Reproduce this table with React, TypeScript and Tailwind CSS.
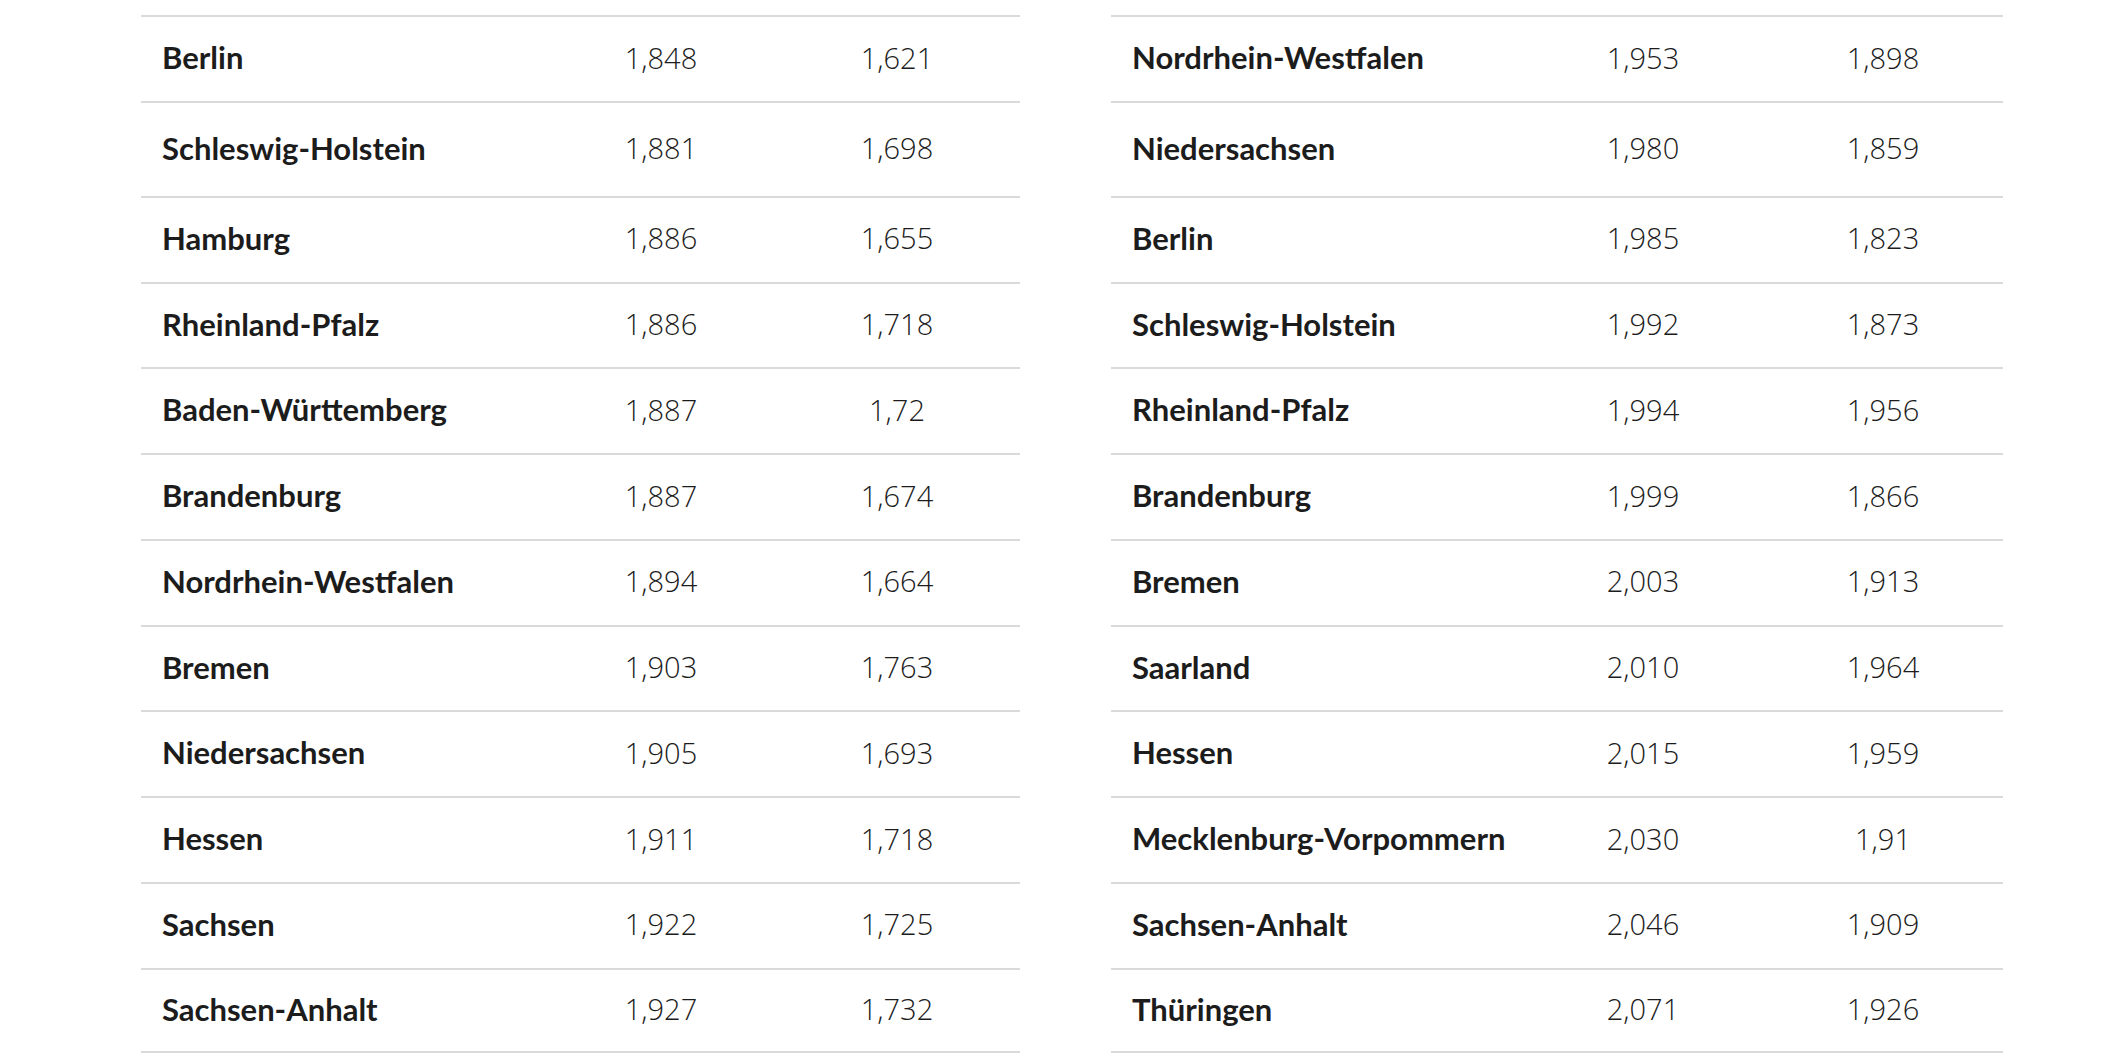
const left: [string, string, string][] = [
  ["Berlin", "1,848", "1,621"],
  ["Schleswig-Holstein", "1,881", "1,698"],
  ["Hamburg", "1,886", "1,655"],
  ["Rheinland-Pfalz", "1,886", "1,718"],
  ["Baden-Württemberg", "1,887", "1,72"],
  ["Brandenburg", "1,887", "1,674"],
  ["Nordrhein-Westfalen", "1,894", "1,664"],
  ["Bremen", "1,903", "1,763"],
  ["Niedersachsen", "1,905", "1,693"],
  ["Hessen", "1,911", "1,718"],
  ["Sachsen", "1,922", "1,725"],
  ["Sachsen-Anhalt", "1,927", "1,732"],
];

const right: [string, string, string][] = [
  ["Nordrhein-Westfalen", "1,953", "1,898"],
  ["Niedersachsen", "1,980", "1,859"],
  ["Berlin", "1,985", "1,823"],
  ["Schleswig-Holstein", "1,992", "1,873"],
  ["Rheinland-Pfalz", "1,994", "1,956"],
  ["Brandenburg", "1,999", "1,866"],
  ["Bremen", "2,003", "1,913"],
  ["Saarland", "2,010", "1,964"],
  ["Hessen", "2,015", "1,959"],
  ["Mecklenburg-Vorpommern", "2,030", "1,91"],
  ["Sachsen-Anhalt", "2,046", "1,909"],
  ["Thüringen", "2,071", "1,926"],
];

function StatTable({ rows, wide }: { rows: [string, string, string][]; wide?: boolean }) {
  return (
    <div className={wide ? "w-[892px]" : "w-[879px]"}>
      {rows.map(([name, a, b], i) => (
        <div
          key={name + i}
          className={
            (wide
              ? "grid grid-cols-[412px_240px_240px] "
              : "grid grid-cols-[400px_240px_232px_1fr] ") +
            "items-center border-t-2 border-[#dadada] pb-[3px] " +
            (i === 1 ? "h-[95px] " : "h-[85.75px] ") +
            (i === rows.length - 1 ? "border-b-2" : "")
          }
        >
          <div className="pl-[21px] font-['Lato',sans-serif] text-[31px] font-bold text-[#1c1c1c]">{name}</div>
          <div className="text-center text-[29px] font-light text-[#1c1c1c]">{a}</div>
          <div className="text-center text-[29px] font-light text-[#1c1c1c]">{b}</div>
        </div>
      ))}
    </div>
  );
}

export default function App() {
  return (
    <div className="min-h-screen bg-white pt-[15px] pl-[141px] font-['Open_Sans',sans-serif]">
      <div className="flex gap-[91px]">
        <StatTable rows={left} />
        <StatTable rows={right} wide />
      </div>
    </div>
  );
}
